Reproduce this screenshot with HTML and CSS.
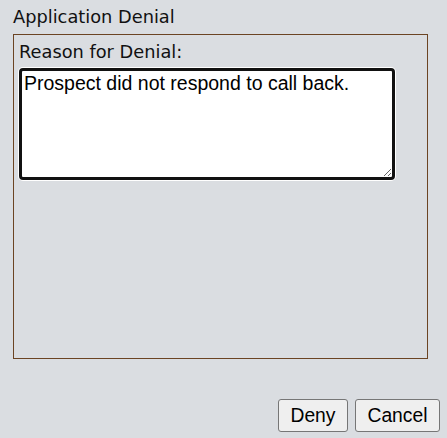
FILE: index.html
```html
<!DOCTYPE html>
<html lang="en">
<head>
    <meta charset="UTF-8">
    <title>Application Denial</title>
    <link rel="stylesheet" href="styles.css">
</head>
<body>

    <!-- Dialog -->
    <div class="dialog">
        <div class="dialog-title">Application Denial</div>

        <div class="denial-box">
            <label class="denial-label" for="reason">Reason for Denial:</label>
            <textarea id="reason" class="reason-input">Prospect did not respond to call back.</textarea>
        </div>

        <div class="buttons">
            <button class="btn">Deny</button>
            <button class="btn">Cancel</button>
        </div>
    </div>

</body>
</html>
```

FILE: styles.css
```css
body {
    margin: 0;
    background: #dadde1;
    font-family: 'DejaVu Sans', Verdana, sans-serif;
    color: #111;
}

.dialog {
    padding: 6px 19px 0 13px;
}

.dialog-title {
    font-size: 17.8px;
    line-height: 22px;
    margin-bottom: 6px;
}

/* Bordered panel */
.denial-box {
    box-sizing: border-box;
    border: 1px solid #6b4423;
    height: 325px;
    padding: 6px 4px 0 5px;
}

.denial-label {
    display: block;
    font-size: 17.8px;
    line-height: 22px;
    margin-bottom: 5px;
}

.reason-input {
    display: block;
    box-sizing: border-box;
    width: 376px;
    height: 112px;
    margin: 0;
    padding: 1px 2px;
    font-family: 'Liberation Sans', Arial, sans-serif;
    font-size: 19.5px;
    color: #000;
    background: #fff;
    border: 3px solid #111;
    border-radius: 4px;
    box-shadow: 0 0 0 1px #fff;
    outline: none;
    resize: vertical;
}

.buttons {
    display: flex;
    justify-content: flex-end;
    gap: 7px;
    margin-top: 40px;
    margin-right: -12px;
}

.btn {
    font-family: 'Liberation Sans', Arial, sans-serif;
    font-size: 19.3px;
    color: #000;
    background: #efefef;
    border: 1px solid #767676;
    border-radius: 3px;
    height: 33px;
    padding: 0 11.5px;
}
```
